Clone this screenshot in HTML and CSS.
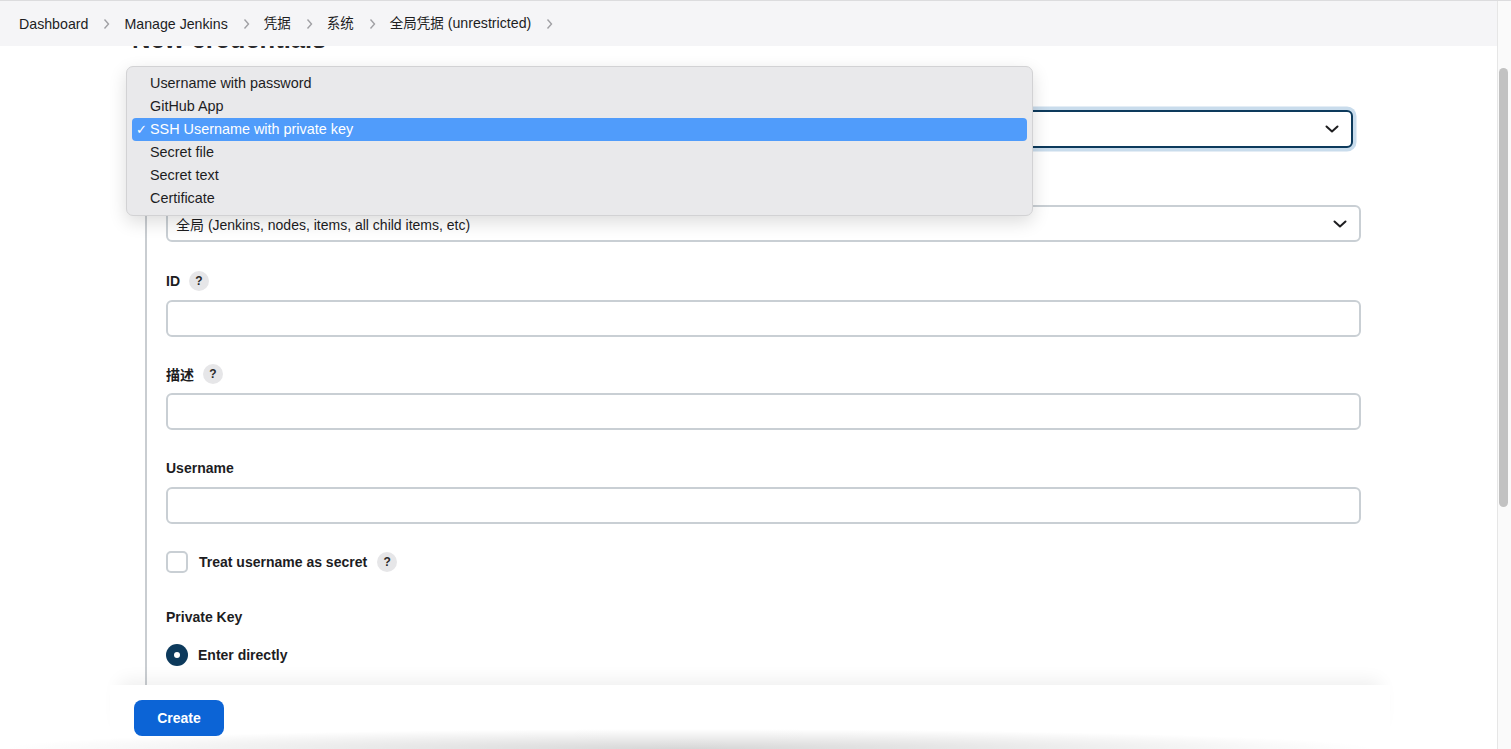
FILE: index.html
```html
<!DOCTYPE html>
<html lang="zh-CN">
<head>
<meta charset="utf-8">
<title>New credentials - Jenkins</title>
<link rel="stylesheet" href="styles.css">
</head>
<body>
<div class="window">
  <div class="page">
    <header class="breadcrumbs">
      <a class="crumb">Dashboard</a>
      <svg class="sep" viewBox="0 0 7 12" width="7" height="12"><path d="M1.5 1.5 L5.5 6 L1.5 10.5" /></svg>
      <a class="crumb">Manage Jenkins</a>
      <svg class="sep" viewBox="0 0 7 12" width="7" height="12"><path d="M1.5 1.5 L5.5 6 L1.5 10.5" /></svg>
      <a class="crumb"><span class="cjk">凭据</span></a>
      <svg class="sep" viewBox="0 0 7 12" width="7" height="12"><path d="M1.5 1.5 L5.5 6 L1.5 10.5" /></svg>
      <a class="crumb"><span class="cjk">系统</span></a>
      <svg class="sep" viewBox="0 0 7 12" width="7" height="12"><path d="M1.5 1.5 L5.5 6 L1.5 10.5" /></svg>
      <a class="crumb"><span class="cjk">全局凭据</span> (unrestricted)</a>
      <svg class="sep" viewBox="0 0 7 12" width="7" height="12"><path d="M1.5 1.5 L5.5 6 L1.5 10.5" /></svg>
    </header>

    <main class="main">
      <h1 class="title">New credentials</h1>

      <div class="kind-field">
        <div class="label">类型</div>
        <div class="select focused">
          <span class="select-text">SSH Username with private key</span>
          <svg class="chev" viewBox="0 0 14 8" width="14" height="8"><path d="M1.5 1.5 L7 6.5 L12.5 1.5"/></svg>
        </div>
      </div>

      <section class="nested">
        <div class="field">
          <div class="label">范围</div>
          <div class="select">
            <span class="select-text">全局 (Jenkins, nodes, items, all child items, etc)</span>
            <svg class="chev" viewBox="0 0 14 8" width="14" height="8"><path d="M1.5 1.5 L7 6.5 L12.5 1.5"/></svg>
          </div>
        </div>

        <div class="field">
          <div class="label">ID <span class="help">?</span></div>
          <div class="input"></div>
        </div>

        <div class="field">
          <div class="label">描述 <span class="help">?</span></div>
          <div class="input"></div>
        </div>

        <div class="field">
          <div class="label">Username</div>
          <div class="input"></div>
        </div>

        <div class="check-row">
          <span class="checkbox"></span>
          <span class="check-label">Treat username as secret</span>
          <span class="help">?</span>
        </div>

        <div class="label pk-label">Private Key</div>

        <div class="radio-row">
          <span class="radio"><span class="radio-dot"></span></span>
          <span class="radio-label">Enter directly</span>
        </div>
      </section>
    </main>

    <footer class="bottom">
      <div class="sticker">
        <button class="create">Create</button>
      </div>
    </footer>

    <ul class="menu">
      <li class="item">Username with password</li>
      <li class="item">GitHub App</li>
      <li class="item selected"><span class="tick">✓</span>SSH Username with private key</li>
      <li class="item">Secret file</li>
      <li class="item">Secret text</li>
      <li class="item">Certificate</li>
    </ul>
  </div>

  <div class="scrollbar"><div class="thumb"></div></div>
</div>
</body>
</html>
```

FILE: styles.css
```css
* { box-sizing: border-box; }

html, body {
  margin: 0;
  padding: 0;
  height: 749px;
  overflow: hidden;
  background: #ffffff;
  font-family: "Liberation Sans", "Noto Sans CJK SC", Arial, sans-serif;
  font-size: 14px;
  color: #1d1d1f;
}

.window {
  display: flex;
  width: 1511px;
  height: 749px;
  border-top: 1px solid #dcdcde;
}

.page {
  position: relative;
  width: 1497px;
  height: 748px;
  display: flex;
  flex-direction: column;
  overflow: hidden;
}

/* breadcrumbs */
.breadcrumbs {
  position: relative;
  z-index: 2;
  height: 45px;
  flex: none;
  display: flex;
  align-items: center;
  padding-left: 19px;
  background: #f5f5f7;
}
.crumb {
  color: #1d1d1f;
  font-size: 14.2px;
  line-height: 20px;
}
.cjk {
  font-size: 13.5px;
}
.sep {
  margin: 0 14px 0 15px;
  fill: none;
  stroke: #a0a0a4;
  stroke-width: 1.4;
}

/* main */
.main {
  flex: 1;
  min-height: 0;
  overflow: hidden;
  padding-left: 132px;
}
.title {
  margin: -22px 0 0 0;
  font-size: 25.5px;
  line-height: 30px;
  font-weight: bold;
  color: #2a2a2c;
}

.label {
  display: flex;
  align-items: center;
  height: 20px;
  font-weight: bold;
  font-size: 14px;
  color: #1d1d1f;
}
.help {
  display: inline-flex;
  align-items: center;
  justify-content: center;
  width: 20px;
  height: 20px;
  margin-left: 9px;
  border-radius: 50%;
  background: #e6e6e8;
  color: #2a2a2a;
  font-size: 12px;
  font-weight: bold;
}

.kind-field {
  margin-top: 27px;
  width: 1221px;
}
.kind-field .label { margin-bottom: 9px; }

.select {
  display: flex;
  align-items: center;
  justify-content: space-between;
  height: 37px;
  padding: 0 12px 0 8px;
  border: 2px solid #c9cfd4;
  border-radius: 6px;
  background: #fff;
}
.select.focused {
  height: 38px;
  border-color: #0d3a5c;
  box-shadow: 0 0 0 3.5px #c9dcec;
}
.select-text {
  font-size: 14px;
  color: #1d1d1f;
}
.chev {
  fill: none;
  stroke: #1d1d1f;
  stroke-width: 2;
  stroke-linecap: round;
  stroke-linejoin: round;
}

.nested {
  margin: 29px 0 0 13px;
  width: 1216px;
  border-left: 2px solid #c9cdd1;
  padding-left: 19px;
  padding-bottom: 60px;
}

.field {
  margin-bottom: 27.5px;
}
.field .label { margin-bottom: 9px; }
.field:first-child { margin-bottom: 28.5px; }
.field:first-child .label { margin-bottom: 8px; }

.input {
  height: 37px;
  border: 2px solid #c9cfd4;
  border-radius: 6px;
  background: #fff;
}

.check-row {
  display: flex;
  align-items: center;
  height: 22px;
}
.checkbox {
  width: 22px;
  height: 22px;
  border: 2px solid #c9cfd4;
  border-radius: 5px;
  background: #fff;
}
.check-label {
  margin-left: 11px;
  font-weight: bold;
  font-size: 14px;
}
.check-row .help { margin-left: 10px; }

.pk-label {
  margin-top: 34px;
}

.radio-row {
  display: flex;
  align-items: center;
  height: 22px;
  margin-top: 17px;
}
.radio {
  display: flex;
  align-items: center;
  justify-content: center;
  width: 22px;
  height: 22px;
  border-radius: 50%;
  background: #0d3a5c;
}
.radio-dot {
  width: 6px;
  height: 6px;
  border-radius: 50%;
  background: #fff;
}
.radio-label {
  margin-left: 10px;
  font-weight: bold;
  font-size: 14px;
}

/* sticky footer */
.bottom {
  position: relative;
  z-index: 1;
  flex: none;
  height: 64px;
  background: radial-gradient(ellipse 46% 20px at 46% 100%, rgba(0, 0, 0, 0.16), rgba(0, 0, 0, 0) 100%), #ffffff;
}
.sticker {
  margin-left: 110px;
  width: 1280px;
  height: 100%;
  padding: 15px 0 0 24px;
  box-shadow: 0 -14px 18px -10px rgba(0, 0, 0, 0.07);
}
.create {
  width: 90px;
  height: 36px;
  border: none;
  border-radius: 8px;
  background: #0c64d6;
  color: #ffffff;
  font-family: "Liberation Sans", Arial, sans-serif;
  font-size: 14px;
  font-weight: bold;
  padding: 0;
}

/* open select menu */
.menu {
  position: absolute;
  z-index: 5;
  left: 126px;
  top: 65px;
  width: 907px;
  margin: 0;
  padding: 5px 5px;
  list-style: none;
  background: #e9e9eb;
  border: 1px solid #d2d2d4;
  border-radius: 7px;
  box-shadow: 0 6px 18px rgba(0, 0, 0, 0.14);
}
.item {
  position: relative;
  height: 23px;
  line-height: 23px;
  padding-left: 18px;
  font-size: 14.4px;
  color: #1d1d1f;
  border-radius: 4px;
}
.item.selected {
  background: #509cfb;
  color: #ffffff;
}
.tick {
  position: absolute;
  left: 4px;
  top: 0;
  font-size: 13px;
  font-family: "DejaVu Sans", sans-serif;
}

/* scrollbar */
.scrollbar {
  width: 14px;
  height: 748px;
  flex: none;
  background: #fafafa;
  border-left: 1px solid #e6e6e6;
  padding: 67px 0 0 1px;
}
.thumb {
  width: 9px;
  height: 439px;
  border-radius: 5px;
  background: #c2c2c2;
}
```
